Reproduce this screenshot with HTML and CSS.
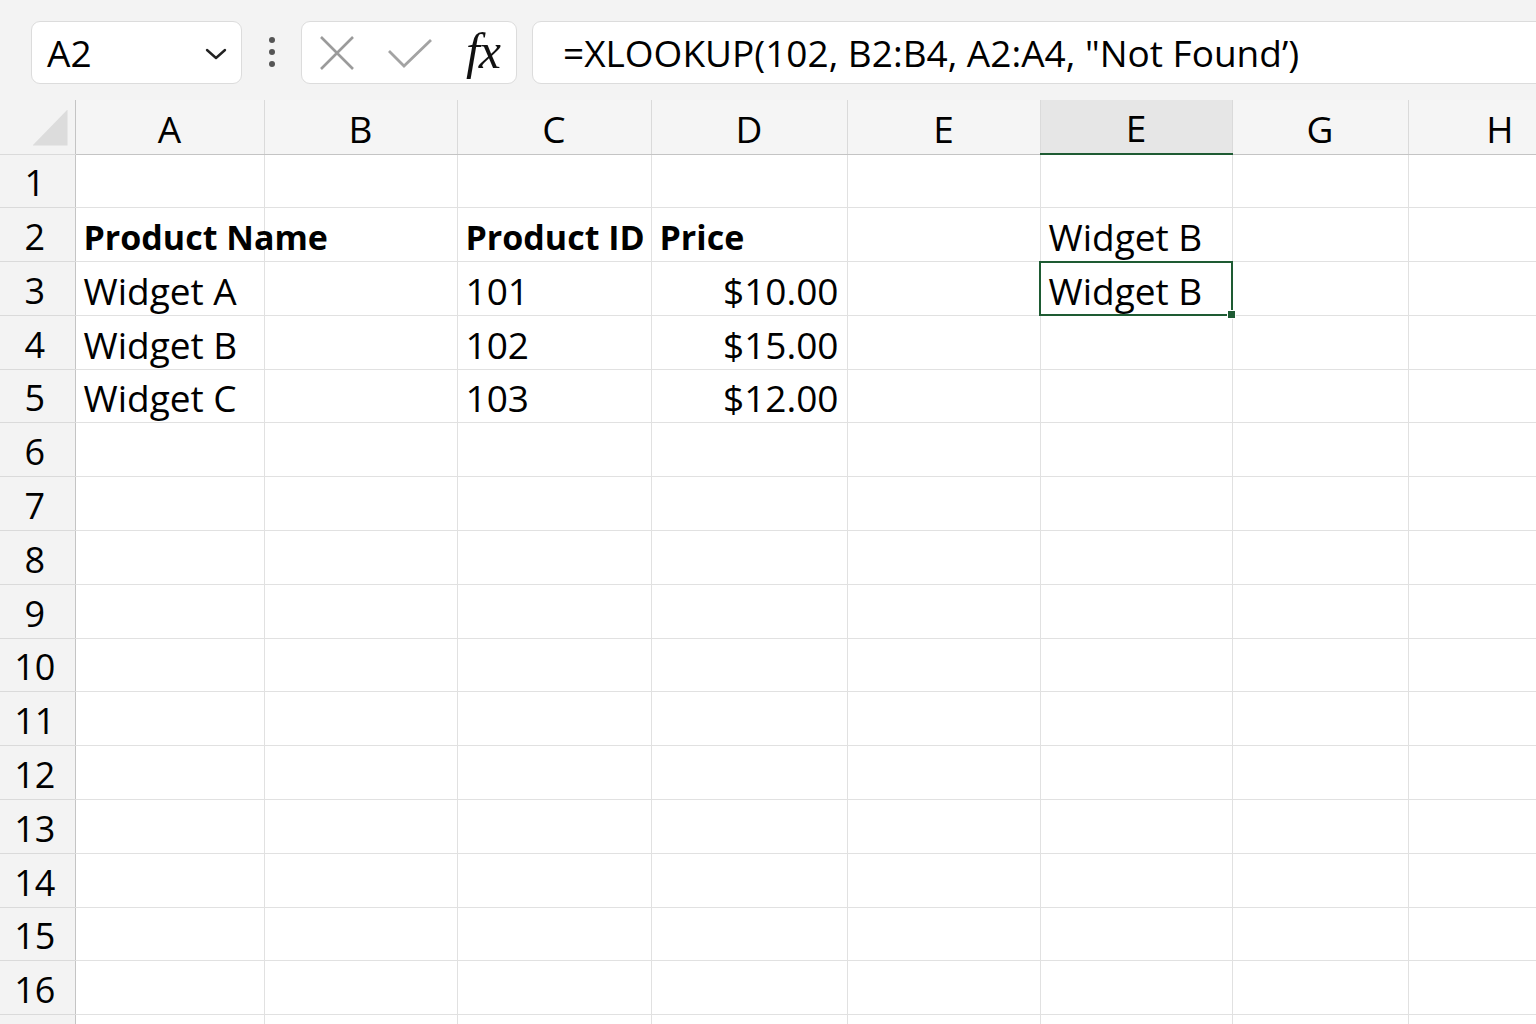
FILE: index.html
```html
<!DOCTYPE html>
<html lang="en">
<head>
    <meta charset="UTF-8">
    <title>XLOOKUP</title>
    <link rel="stylesheet" href="styles.css">
</head>
<body>
    <div class="toolbar">
        <div class="name-box">
            <span>A2</span>
            <svg class="chevron" width="24" height="14" viewBox="0 0 24 14"><path d="M3 3 L12 11 L21 3" fill="none" stroke="#222" stroke-width="2.4" stroke-linecap="round" stroke-linejoin="round"/></svg>
        </div>
        <div class="dots"><i></i><i></i><i></i></div>
        <div class="fx-box">
            <svg width="36" height="36" viewBox="0 0 36 36"><path d="M2 2 L34 34 M34 2 L2 34" stroke="#9b9b9b" stroke-width="2.6" fill="none"/></svg>
            <svg width="46" height="32" viewBox="0 0 46 32"><path d="M2 14 L17 29 L44 3" stroke="#a3a3a3" stroke-width="2.8" fill="none" stroke-linejoin="miter"/></svg>
            <span class="fx">fx</span>
        </div>
        <div class="formula">=XLOOKUP(102, B2:B4, A2:A4, "Not Found’)</div>
    </div>

    <table class="sheet">
        <colgroup>
            <col style="width:75px"><col style="width:189px"><col style="width:193px"><col style="width:194px">
            <col style="width:196px"><col style="width:193px"><col style="width:192px"><col style="width:176px"><col style="width:184px">
        </colgroup>
        <tr class="col-heads">
            <th class="corner"><div class="select-all"></div></th>
            <th>A</th><th>B</th><th>C</th><th>D</th><th>E</th><th class="active">E</th><th>G</th><th>H</th>
        </tr>
        <tr><th>1</th><td></td><td></td><td></td><td></td><td></td><td></td><td></td><td></td></tr>
        <tr><th>2</th><td class="bold">Product Name</td><td></td><td class="bold">Product ID</td><td class="bold">Price</td><td></td><td>Widget B</td><td></td><td></td></tr>
        <tr><th>3</th><td>Widget A</td><td></td><td>101</td><td class="num">$10.00</td><td></td><td class="selected">Widget B</td><td></td><td></td></tr>
        <tr><th>4</th><td>Widget B</td><td></td><td>102</td><td class="num">$15.00</td><td></td><td></td><td></td><td></td></tr>
        <tr><th>5</th><td>Widget C</td><td></td><td>103</td><td class="num">$12.00</td><td></td><td></td><td></td><td></td></tr>
        <tr><th>6</th><td></td><td></td><td></td><td></td><td></td><td></td><td></td><td></td></tr>
        <tr><th>7</th><td></td><td></td><td></td><td></td><td></td><td></td><td></td><td></td></tr>
        <tr><th>8</th><td></td><td></td><td></td><td></td><td></td><td></td><td></td><td></td></tr>
        <tr><th>9</th><td></td><td></td><td></td><td></td><td></td><td></td><td></td><td></td></tr>
        <tr><th>10</th><td></td><td></td><td></td><td></td><td></td><td></td><td></td><td></td></tr>
        <tr><th>11</th><td></td><td></td><td></td><td></td><td></td><td></td><td></td><td></td></tr>
        <tr><th>12</th><td></td><td></td><td></td><td></td><td></td><td></td><td></td><td></td></tr>
        <tr><th>13</th><td></td><td></td><td></td><td></td><td></td><td></td><td></td><td></td></tr>
        <tr><th>14</th><td></td><td></td><td></td><td></td><td></td><td></td><td></td><td></td></tr>
        <tr><th>15</th><td></td><td></td><td></td><td></td><td></td><td></td><td></td><td></td></tr>
        <tr><th>16</th><td></td><td></td><td></td><td></td><td></td><td></td><td></td><td></td></tr>
        <tr><th></th><td></td><td></td><td></td><td></td><td></td><td></td><td></td><td></td></tr>
    </table>
</body>
</html>
```

FILE: styles.css
```css
* { box-sizing: border-box; margin: 0; padding: 0; }
html, body { width: 1536px; height: 1024px; overflow: hidden; }
body { background: #f3f3f3; font-family: "Open Sans", "Noto Sans", sans-serif; color: #000; }

/* formula bar */
.toolbar { display: flex; align-items: flex-start; height: 100px; padding: 21px 0 0 31px; }
.name-box { width: 211px; height: 63px; display: flex; align-items: center; justify-content: space-between; padding: 0 13px 0 15px; background: #fff; border: 1.5px solid #dcdcdc; border-radius: 9px; font-size: 37px; }
.chevron { margin-top: 2px; }
.dots { width: 59px; height: 63px; display: flex; flex-direction: column; align-items: center; justify-content: center; gap: 6px; padding-bottom: 2px; }
.dots i { width: 6px; height: 6px; border-radius: 50%; background: #555; }
.fx-box { width: 216px; height: 63px; display: flex; align-items: center; padding: 0 16px 0 17px; background: #fff; border: 1.5px solid #dcdcdc; border-radius: 9px; }
.fx-box svg:first-child { margin-right: 32px; }
.fx { margin-left: auto; font-family: "Liberation Serif", serif; font-style: italic; font-size: 50px; letter-spacing: -1px; color: #111; padding-bottom: 4px; }
.formula { flex: 1; height: 63px; margin-left: 15px; margin-right: -20px; display: flex; align-items: center; padding-left: 30px; background: #fff; border: 1.5px solid #dcdcdc; border-radius: 9px; font-size: 37px; white-space: nowrap; }

/* grid */
.sheet { width: 1592px; border-collapse: collapse; table-layout: fixed; background: #fff; font-size: 37px; }
.sheet th, .sheet td { height: 53.8px; padding: 0 8px 0; white-space: nowrap; overflow: visible; vertical-align: bottom; line-height: 48px; border: 1px solid #e1e1e1; border-top: none; }
.sheet td { text-align: left; font-weight: normal; }
.sheet td.bold { font-weight: bold; font-size: 34px; }
.sheet td.num { text-align: right; }
.sheet tr > th:first-child { background: #f3f3f3; font-weight: normal; text-align: center; font-size: 36px; border-left: none; border-right: 1px solid #c4c4c4; border-bottom-color: #dadada; padding: 0 5px 0 0; }

.col-heads th { background: #f5f5f5; font-weight: normal; font-size: 37px; height: 54px; padding-bottom: 1px; border-top: none; border-bottom: 1px solid #c4c4c4; border-left: 1px solid #dadada; border-right: 1px solid #dadada; }
.col-heads th.active { background: #e6e6e6; border-bottom: 2px solid #1e5b33; }
.col-heads th.corner { position: relative; background: #f3f3f3; border-left: none; }
.select-all { position: absolute; right: 7px; bottom: 8px; width: 35px; height: 36px; background: #dcdcdc; clip-path: polygon(100% 0, 100% 100%, 0 100%); }

.sheet td.selected { position: relative; outline: 2px solid #1e5b33; outline-offset: -1px; }
.sheet td.selected::after { content: ""; position: absolute; right: -4px; bottom: -4px; width: 7px; height: 7px; background: #1e5b33; border: 1px solid #fff; }
```
